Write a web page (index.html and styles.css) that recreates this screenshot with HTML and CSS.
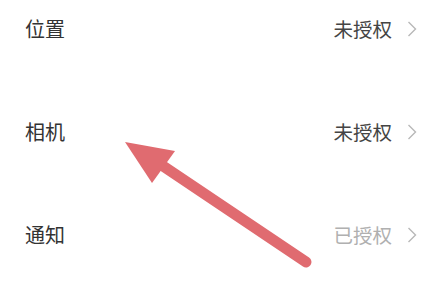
FILE: index.html
```html
<!DOCTYPE html>
<html lang="zh">
<head>
<meta charset="utf-8">
<link rel="stylesheet" href="styles.css">
</head>
<body>
<div class="page">
  <ul class="list">
    <li class="row">
      <span class="label">位置</span>
      <span class="value">未授权<svg class="chev" viewBox="0 0 10 16"><polyline points="1.5,1 8.5,8 1.5,15"/></svg></span>
    </li>
    <li class="row">
      <span class="label">相机</span>
      <span class="value">未授权<svg class="chev" viewBox="0 0 10 16"><polyline points="1.5,1 8.5,8 1.5,15"/></svg></span>
    </li>
    <li class="row">
      <span class="label">通知</span>
      <span class="value granted">已授权<svg class="chev" viewBox="0 0 10 16"><polyline points="1.5,1 8.5,8 1.5,15"/></svg></span>
    </li>
  </ul>
  <svg class="arrow" viewBox="0 0 437 283" width="437" height="283">
    <line x1="163" y1="166" x2="306" y2="262" stroke="#e06b70" stroke-width="11" stroke-linecap="round"/>
    <polygon points="125,142 175,151 152,183" fill="#e06b70"/>
  </svg>
</div>
</body>
</html>
```
FILE: styles.css
```css
html, body {
  margin: 0;
  padding: 0;
  background: #ffffff;
}
.page {
  position: relative;
  width: 437px;
  height: 283px;
  overflow: hidden;
  font-family: "Noto Sans CJK SC", "Noto Sans", sans-serif;
}
.list {
  list-style: none;
  margin: 0;
  padding: 19px 20px 0 25px;
  display: flex;
  flex-direction: column;
  gap: 83px;
}
.row {
  display: flex;
  justify-content: space-between;
  align-items: center;
  height: 20px;
}
.label {
  font-size: 20px;
  line-height: 20px;
  color: #333333;
}
.value {
  display: flex;
  align-items: center;
  gap: 15px;
  font-size: 19.5px;
  line-height: 20px;
  color: #444444;
}
.value.granted {
  color: #b0b0b0;
}
.chev {
  width: 10px;
  height: 16px;
  fill: none;
  stroke: #b8b8b8;
  stroke-width: 1.4;
}
.arrow {
  position: absolute;
  left: 0;
  top: 0;
}
```
